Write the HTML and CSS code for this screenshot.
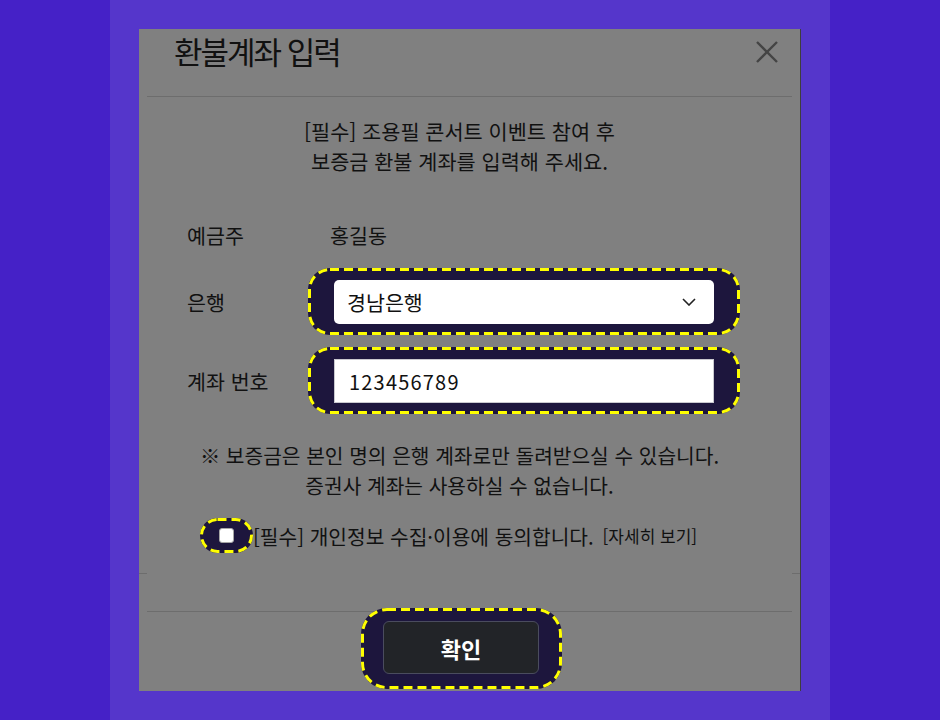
FILE: index.html
```html
<!DOCTYPE html>
<html lang="ko">
<head>
<meta charset="utf-8">
<title>환불계좌 입력</title>
<link rel="stylesheet" href="styles.css">
</head>
<body>
<div class="page">
  <div class="modal" role="dialog" aria-labelledby="modal-title">
    <div class="modal-header">
      <h2 class="modal-title" id="modal-title">환불계좌 입력</h2>
      <button class="close-btn" type="button" aria-label="닫기">
        <svg width="24" height="24" viewBox="0 0 24 24" aria-hidden="true">
          <path d="M2 2 L22 22 M22 2 L2 22" stroke="#444" stroke-width="2.4" fill="none"/>
        </svg>
      </button>
    </div>
    <div class="modal-body">
      <p class="intro">[필수] 조용필 콘서트 이벤트 참여 후<br>보증금 환불 계좌를 입력해 주세요.</p>
      <div class="form">
        <div class="form-row row-static">
          <span class="label">예금주</span>
          <span class="value">홍길동</span>
        </div>
        <div class="form-row">
          <label class="label" for="bank">은행</label>
          <div class="focus-ring field-ring">
            <div class="select-wrap">
              <select class="select" id="bank"><option>경남은행</option></select>
              <svg class="chevron" width="14" height="8" viewBox="0 0 14 8" aria-hidden="true">
                <path d="M1 1 L7 7 L13 1" stroke="#222" stroke-width="1.6" fill="none"/>
              </svg>
            </div>
            <svg class="ring-line" width="432" height="67" aria-hidden="true"><rect x="1.5" y="1.5" width="429" height="64" rx="20.5"/></svg>
          </div>
        </div>
        <div class="form-row">
          <label class="label" for="account">계좌 번호</label>
          <div class="focus-ring field-ring">
            <input class="input" id="account" type="text" value="123456789">
            <svg class="ring-line" width="432" height="67" aria-hidden="true"><rect x="1.5" y="1.5" width="429" height="64" rx="20.5"/></svg>
          </div>
        </div>
      </div>
      <p class="notice">※ 보증금은 본인 명의 은행 계좌로만 돌려받으실 수 있습니다.<br>증권사 계좌는 사용하실 수 없습니다.</p>
      <div class="agree">
        <span class="focus-ring check-ring">
          <span class="check"></span>
          <svg class="ring-line" width="53" height="35" aria-hidden="true"><rect x="1.5" y="1.5" width="50" height="32" rx="16"/></svg>
        </span>
        <span class="agree-text">[필수] 개인정보 수집·이용에 동의합니다.</span>
        <span class="detail">[자세히 보기]</span>
      </div>
    </div>
    <div class="edge-line"></div>
    <div class="modal-footer">
      <div class="focus-ring btn-ring">
        <button class="confirm" type="button">확인</button>
        <svg class="ring-line" width="201" height="81" aria-hidden="true"><rect x="1.5" y="1.5" width="198" height="78" rx="24.5"/></svg>
      </div>
    </div>
  </div>
</div>
</body>
</html>
```
FILE: styles.css
```css
* { box-sizing: border-box; }

body {
  margin: 0;
  background: #4521c7;
  font-family: "Noto Sans CJK KR", "Noto Sans", sans-serif;
  color: #111;
}

.page {
  width: 720px;
  min-height: 720px;
  margin: 0 auto;
  background: #5536cb;
  padding-top: 29px;
}

.modal {
  width: 662px;
  height: 662px;
  margin: 0 auto;
  background: #808080;
  border-right: 1px solid #3e3e3e;
  display: flex;
  flex-direction: column;
}

.modal-header {
  margin: 0 8px;
  height: 68px;
  border-bottom: 1px solid #6d6d6d;
  display: flex;
  align-items: flex-start;
  justify-content: space-between;
  padding: 0 13px 0 27px;
}

.modal-title {
  margin: 0;
  font-size: 31px;
  font-weight: 400;
  letter-spacing: -2px;
  line-height: 44px;
  color: #111;
}

.close-btn {
  margin-top: 11px;
  width: 24px;
  height: 24px;
  padding: 0;
  border: 0;
  background: transparent;
  display: flex;
}

.modal-body {
  padding: 0 20px 20px 0;
}

.intro {
  margin: 19px 0 0;
  text-align: center;
  font-size: 20.8px;
  line-height: 30px;
}

.form {
  margin-top: 36px;
  padding-left: 48px;
  display: flex;
  flex-direction: column;
}

.form-row {
  display: flex;
  align-items: center;
  margin-top: 12px;
}

.form-row.row-static {
  height: 46px;
  margin-top: 0;
  margin-bottom: -2px;
}

.label {
  width: 121px;
  font-size: 20.6px;
}

.value {
  padding-left: 22px;
  font-size: 20.6px;
}

.focus-ring {
  position: relative;
  flex-shrink: 0;
  background: #1d163d;
}

.ring-line {
  position: absolute;
  left: 0;
  top: 0;
  pointer-events: none;
}

.ring-line rect {
  fill: none;
  stroke: #ffff00;
  stroke-width: 3;
  stroke-dasharray: 9 5;
}

.field-ring {
  width: 432px;
  height: 67px;
  padding: 12px 26px 11px;
  border-radius: 22px;
}

.select-wrap {
  position: relative;
  height: 44px;
}

.select {
  appearance: none;
  -webkit-appearance: none;
  width: 380px;
  height: 44px;
  border: 0;
  border-radius: 5px;
  background: #fff;
  padding: 0 13px;
  font-family: inherit;
  font-size: 20.6px;
  color: #111;
}

.chevron {
  position: absolute;
  right: 18px;
  top: 18px;
}

.input {
  display: block;
  width: 380px;
  height: 44px;
  border: 1px solid #c9c9cf;
  border-radius: 0;
  background: #fff;
  padding: 0 14px;
  font-family: inherit;
  font-size: 20px;
  letter-spacing: 1.2px;
  color: #111;
}

.notice {
  margin: 26px 0 0;
  text-align: center;
  font-size: 20.3px;
  line-height: 30px;
}

.agree {
  margin-top: 18px;
  padding-left: 61px;
  display: flex;
  align-items: center;
  height: 35px;
}

.check-ring {
  width: 53px;
  height: 35px;
  border-radius: 18px;
  display: flex;
  align-items: center;
  justify-content: center;
}

.check {
  width: 15px;
  height: 15px;
  background: #fff;
  border: 1px solid #a6a6a6;
  border-radius: 3px;
}

.agree-text {
  font-size: 20.3px;
}

.detail {
  margin-left: 9px;
  font-size: 17px;
}

.edge-line {
  height: 1px;
  background: linear-gradient(to right, #6d6d6d 8px, transparent 8px, transparent calc(100% - 8px), #6d6d6d calc(100% - 8px));
}

.modal-footer {
  margin: 37px 8px 0;
  border-top: 1px solid #6d6d6d;
  display: flex;
  justify-content: center;
  padding-right: 16px;
}

.btn-ring {
  width: 201px;
  height: 81px;
  margin-top: -4px;
  padding: 13px 23px 15px 22px;
  border-radius: 26px;
}

.confirm {
  display: block;
  width: 156px;
  height: 53px;
  background: #222428;
  border: 1px solid #4a4c5e;
  border-radius: 6px;
  color: #fff;
  font-family: inherit;
  font-size: 22px;
  font-weight: 700;
}
```
